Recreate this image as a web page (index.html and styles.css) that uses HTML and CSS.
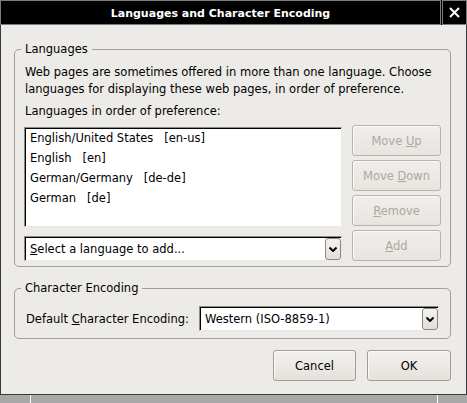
FILE: index.html
```html
<!DOCTYPE html>
<html>
<head>
<meta charset="utf-8">
<link rel="stylesheet" href="styles.css">
</head>
<body>
<header class="titlebar">
  <div class="title">Languages and Character Encoding</div>
  <div class="close">
    <svg width="11" height="11" viewBox="0 0 11 11"><path d="M1 1L10 10M10 1L1 10" stroke="#fff" stroke-width="2" fill="none"/></svg>
  </div>
</header>
<main class="dialog">
  <fieldset class="group lang-group">
    <legend>Languages</legend>
    <p class="desc">Web pages are sometimes offered in more than one language. Choose<br>languages for displaying these web pages, in order of preference.</p>
    <p class="list-label">Languages in order of preference:</p>
    <div class="lang-row">
      <div class="lang-left">
        <ul class="listbox">
          <li>English/United States   [en-us]</li>
          <li>English   [en]</li>
          <li>German/Germany   [de-de]</li>
          <li>German   [de]</li>
        </ul>
        <div class="combo">
          <span class="combo-text"><u>S</u>elect a language to add...</span>
          <span class="combo-btn"><svg width="8" height="5" viewBox="0 0 8 5"><path d="M0.5 0.5L4 4L7.5 0.5" stroke="#000" stroke-width="2" fill="none"/></svg></span>
        </div>
      </div>
      <div class="btn-col">
        <button class="btn" disabled>Move <u>U</u>p</button>
        <button class="btn" disabled>Move <u>D</u>own</button>
        <button class="btn" disabled><u>R</u>emove</button>
        <button class="btn" disabled><u>A</u>dd</button>
      </div>
    </div>
  </fieldset>
  <fieldset class="group enc-group">
    <legend>Character Encoding</legend>
    <div class="enc-row">
      <span class="enc-label">Default <u>C</u>haracter Encoding:</span>
      <div class="combo enc-combo">
        <span class="combo-text">Western (ISO-8859-1)</span>
        <span class="combo-btn"><svg width="8" height="5" viewBox="0 0 8 5"><path d="M0.5 0.5L4 4L7.5 0.5" stroke="#000" stroke-width="2" fill="none"/></svg></span>
      </div>
    </div>
  </fieldset>
  <div class="actions">
    <button class="btn cancel">Cancel</button>
    <button class="btn ok">OK</button>
  </div>
</main>
<footer class="taskbar">
  <span class="tb-seg seg1"></span><span class="tb-sep"></span><span class="tb-seg seg2"></span><span class="tb-sep"></span><span class="tb-seg seg3"></span>
</footer>
</body>
</html>
```
FILE: styles.css
```css
html, body {
  margin: 0;
  padding: 0;
}
body {
  width: 467px;
  height: 403px;
  overflow: hidden;
  font-family: "DejaVu Sans", "Bitstream Vera Sans", sans-serif;
  font-size: 11.5px;
  color: #000;
  background: #a8a8a8;
  display: flex;
  flex-direction: column;
}
.titlebar {
  display: flex;
  height: 25px;
  background: #000;
  flex: 0 0 25px;
}
.title {
  box-sizing: border-box;
  flex: 0 0 441px;
  border: 1px solid #7c7c7c;
  color: #fff;
  font-weight: bold;
  font-size: 11px;
  display: flex;
  align-items: center;
  justify-content: center;
  padding-top: 2px;
}
.close {
  box-sizing: border-box;
  flex: 1;
  margin-left: 1px;
  border: 1px solid #7c7c7c;
  display: flex;
  align-items: center;
  justify-content: center;
}
.dialog {
  box-sizing: border-box;
  flex: 0 0 370px;
  background: #edebe7;
  border: 1px solid #3a3a3a;
  border-top: 0;
  padding: 15px 15px 0 13px;
}
.group {
  margin: 0;
  min-width: 0;
  border: 1px solid #a39f97;
  border-radius: 5px;
  padding: 6px 9px 5px 9px;
}
.group legend {
  padding: 0 4px;
  margin-left: -3px;
  line-height: 18px;
}
.desc, .list-label {
  margin: 0;
  line-height: 17px;
  padding-left: 1px;
  white-space: nowrap;
}
.desc {
  margin-bottom: 5px;
}
.lang-row {
  display: flex;
  gap: 10px;
  margin-top: 5px;
}
.lang-left {
  width: 318px;
  display: flex;
  flex-direction: column;
  gap: 9px;
  margin-top: 2px;
}
.listbox {
  box-sizing: border-box;
  height: 100px;
  margin: 0;
  padding: 0 0 0 5px;
  list-style: none;
  background: #fff;
  border: 1px solid;
  border-color: #8f8b84 #e9e7e3 #e9e7e3 #8f8b84;
  box-shadow: inset 1px 1px 0 #000;
}
.listbox li {
  height: 20px;
  line-height: 20px;
  white-space: pre;
}
.combo {
  box-sizing: border-box;
  height: 25px;
  background: #fff;
  border: 1px solid;
  border-color: #8f8b84 #e9e7e3 #e9e7e3 #8f8b84;
  box-shadow: inset 1px 1px 0 #000;
  display: flex;
  align-items: center;
  justify-content: space-between;
  padding: 0 0 0 5px;
}
.combo-text {
  white-space: nowrap;
}
.combo-btn {
  box-sizing: border-box;
  width: 16px;
  height: 22px;
  margin-top: 1px;
  border: 1px solid #8c887f;
  border-radius: 3px;
  background: linear-gradient(#f4f2ef, #e2dfd9);
  display: flex;
  align-items: center;
  justify-content: center;
}
.btn-col {
  width: 89px;
  display: flex;
  flex-direction: column;
  gap: 4px;
}
.btn {
  box-sizing: border-box;
  height: 31px;
  margin: 0;
  padding: 0;
  font: inherit;
  color: #000;
  border: 1px solid #a19d95;
  border-radius: 3px;
  background: linear-gradient(#f3f1ee, #e5e2dd);
  box-shadow: inset 1px 1px 0 #fbfaf9;
}
.btn:disabled {
  color: #aca8a0;
  background: linear-gradient(#f0eeea, #e8e5e1);
  border-color: #b8b4ad;
}
.enc-group {
  margin-top: 12px;
  padding: 9px 9px 7px 9px;
}
.enc-row {
  display: flex;
  align-items: center;
}
.enc-label {
  padding-left: 2px;
  white-space: nowrap;
}
.enc-combo {
  width: 240px;
  margin-left: auto;
  margin-right: 2px;
}
.actions {
  display: flex;
  justify-content: flex-end;
  gap: 11px;
  margin-top: 11px;
}
.cancel {
  width: 83px;
}
.ok {
  width: 84px;
}
.taskbar {
  flex: 0 0 8px;
  display: flex;
  background: #a8a8a8;
}
.seg1 { width: 30px; }
.seg2 { width: 406px; }
.seg3 { flex: 1; }
.tb-sep {
  width: 1px;
  background: #fff;
}
```
